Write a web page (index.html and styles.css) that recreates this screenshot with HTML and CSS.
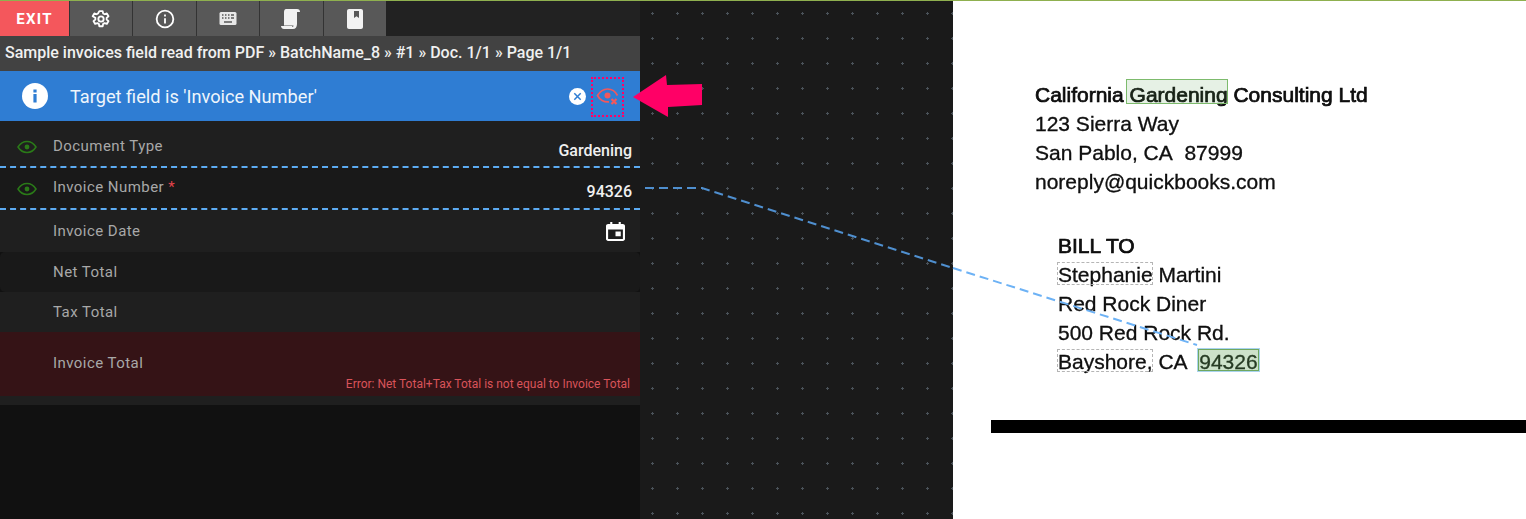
FILE: index.html
```html
<!DOCTYPE html>
<html>
  <head>
    <title>Invoice verification</title>
    <link rel="stylesheet" href="styles.css">
  </head>

  <body>
    <div id="content">
      <div id="sidebar">
        <div id="toolbar">
          <button class="exit-button" type="button">EXIT</button>
          <button class="tool-button" type="button">
            <svg width="20" height="20" viewBox="0 0 24 24" fill="none" stroke="#fff" stroke-width="2.2" stroke-linejoin="round"><path d="M10 2.5h4l.6 2.9 1.7.9 2.7-1 2 3.4-2.2 1.9v2l2.2 1.9-2 3.4-2.7-1-1.7.9-.6 2.9h-4l-.6-2.9-1.7-.9-2.7 1-2-3.4 2.2-1.9v-2L2 8.700l2-3.400 2.700 1 1.700-.9z"/><circle cx="12" cy="12" r="3.200"/></svg>
          </button>
          <button class="tool-button" type="button">
            <svg width="20" height="20" viewBox="0 0 24 24" fill="none" stroke="#fff" stroke-width="2.200"><circle cx="12" cy="12" r="10"/><path d="M12 11v6.500M12 6.500v2.500"/></svg>
          </button>
          <button class="tool-button" type="button">
            <svg width="20" height="16" viewBox="0 0 20 16"><rect x="0.500" y="1" width="17" height="13" rx="1.500" fill="#e8e8e8" transform="translate(1 0)"/><path d="M4 4h1.500M7 4h1.500M10 4h1.500M13 4h3M4 7h1.500M7 7h1.500M10 7h1.500M13 7h3M6 11h8" stroke="#585858" stroke-width="1.400"/></svg>
          </button>
          <button class="tool-button" type="button">
            <svg width="20" height="22" viewBox="0 0 20 22" fill="#f2f2f2"><path d="M5 1h11c2 0 3 1 3 3h-3v12c0 3-1.500 5-4 5H3c-2 0-3-1.500-3-3h11c.500 1.500 1.500 1 1.500-.5H3V4c0-2 1-3 2-3z"/></svg>
          </button>
          <button class="tool-button" type="button">
            <svg width="16" height="20" viewBox="0 0 16 20"><path d="M2 0h12c1.100 0 2 .9 2 2v16c0 1.100-.9 2-2 2H2c-1.100 0-2-.9-2-2V2C0 .9.900 0 2 0z" fill="#f2f2f2"/><path d="M7 2h5v7l-2.500-1.800L7 9z" fill="#585858"/></svg>
          </button>
        </div>

        <div id="breadcrumb">Sample invoices field read from PDF » BatchName_8 » #1 » Doc. 1/1 » Page 1/1</div>

        <div id="banner">
          <svg class="banner-info" width="26" height="26" viewBox="0 0 26 26"><circle cx="13" cy="13" r="13" fill="#fff"/><rect x="11.400" y="11" width="3.200" height="8.500" fill="#2f7dd3"/><rect x="11.400" y="6.500" width="3.200" height="3" fill="#2f7dd3"/></svg>
          <span class="banner-text">Target field is 'Invoice Number'</span>
          <svg class="banner-close" width="17" height="17" viewBox="0 0 17 17"><circle cx="8.500" cy="8.500" r="8.500" fill="#fff"/><path d="M5.300 5.300l6.400 6.400M11.700 5.300l-6.400 6.400" stroke="#2f7dd3" stroke-width="1.500"/></svg>
          <div class="banner-eye">
            <svg width="24" height="20" viewBox="0 0 24 20" fill="none"><path d="M13 14.800C8 15.500 3.500 12.500 1.500 8.500 4 4.500 8 2 11.500 2c4 0 8 2.500 10 6.500" stroke="#f2585c" stroke-width="1.700"/><circle cx="11.500" cy="8.500" r="3" fill="#f2585c"/><path d="M15.500 12l5 5M20.500 12l-5 5" stroke="#f2585c" stroke-width="2.200"/></svg>
          </div>
        </div>

        <div class="field-row row-doctype">
          <svg class="eye" width="20" height="14" viewBox="0 0 20 14" fill="none"><path d="M1 7c2.200-3.500 5.400-5.500 9-5.500S16.800 3.500 19 7c-2.200 3.500-5.400 5.500-9 5.500S3.200 10.500 1 7z" stroke="#2a7a18" stroke-width="1.500"/><circle cx="10" cy="7" r="2.400" fill="#2a7a18"/></svg>
          <span class="field-label">Document Type</span>
          <span class="field-value">Gardening</span>
        </div>
        <div class="field-row row-target">
          <svg class="eye" width="20" height="14" viewBox="0 0 20 14" fill="none"><path d="M1 7c2.200-3.500 5.400-5.500 9-5.500S16.800 3.500 19 7c-2.200 3.500-5.400 5.500-9 5.500S3.200 10.500 1 7z" stroke="#2a7a18" stroke-width="1.500"/><circle cx="10" cy="7" r="2.400" fill="#2a7a18"/></svg>
          <span class="field-label">Invoice Number <span class="required">*</span></span>
          <span class="field-value">94326</span>
        </div>
        <div class="field-row row-date">
          <span class="field-label">Invoice Date</span>
          <svg class="calendar" width="19" height="19" viewBox="0 0 18 20" preserveAspectRatio="none"><path d="M2 2h2V0h2v2h6V0h2v2h2c1 0 2 1 2 2v14c0 1-1 2-2 2H2c-1 0-2-1-2-2V4c0-1 1-2 2-2zm0 6v10h14V8z" fill="#fff"/><rect x="9" y="10" width="5" height="5" fill="#fff"/></svg>
        </div>
        <div class="field-row row-net">
          <span class="field-label">Net Total</span>
        </div>
        <div class="field-row row-tax">
          <span class="field-label">Tax Total</span>
        </div>
        <div class="field-row row-error">
          <span class="field-label">Invoice Total</span>
          <span class="error-text">Error: Net Total+Tax Total is not equal to Invoice Total</span>
        </div>
        <div class="sidebar-foot"></div>
      </div>

      <div id="canvas"></div>

      <div id="document">
        <div class="doc-block">
          <div class="doc-line">California Gardening Consulting Ltd</div>
          <div class="doc-line thin">123 Sierra Way</div>
          <div class="doc-line thin">San Pablo, CA&nbsp; 87999</div>
          <div class="doc-line thin">noreply@quickbooks.com</div>
        </div>
        <div class="doc-block bill-to">
          <div class="doc-line">BILL TO</div>
          <div class="doc-line thin">Stephanie Martini</div>
          <div class="doc-line thin">Red Rock Diner</div>
          <div class="doc-line thin">500 Red Rock Rd.</div>
          <div class="doc-line thin">Bayshore, CA&nbsp; 94326</div>
        </div>
        <div class="doc-rule"></div>
        <div class="box box-green box-gardening"></div>
        <div class="box box-dashed box-stephanie"></div>
        <div class="box box-dashed box-bayshore"></div>
        <div class="box box-target box-zip"></div>
      </div>

      <svg id="overlay" width="1526" height="519" viewBox="0 0 1526 519">
        <defs>
          <pattern id="dots" x="640" y="1" width="25" height="25" patternUnits="userSpaceOnUse">
            <path d="M11 12.500h3M12.500 11v3" stroke="#4a5259" stroke-width="1"/>
          </pattern>
        </defs>
        <rect x="640" y="1" width="313" height="518" fill="url(#dots)"/>
        <path d="M645 188H702L953 268" fill="none" stroke="#4f8fcf" stroke-width="2" stroke-dasharray="9 5"/>
        <path d="M953 268L1197 345" fill="none" stroke="#6db2f5" stroke-width="2" stroke-dasharray="9 5"/>
        <path d="M633 97L666 75 667 85 702 84 702 105 668 107 668 117z" fill="#ff0066"/>
      </svg>
    </div>
  </body>
</html>
```

FILE: styles.css
```css
html, body {
  margin: 0;
  height: 100%;
  overflow: hidden;
}

body {
  background: #1a1a1a;
  font-family: 'Roboto', sans-serif;
}

#content {
  position: relative;
  display: flex;
  width: 1526px;
  height: 519px;
  border-top: 1px solid #8fb04f;
  box-sizing: border-box;
}

#sidebar {
  width: 640px;
  background: #111;
  flex: none;
}

#toolbar {
  display: flex;
  height: 35px;
  background: #222;
}

button {
  border: none;
  padding: 0;
  display: flex;
  align-items: center;
  justify-content: center;
}

.exit-button {
  width: 69px;
  background: #f4575c;
  color: #fff;
  font-family: 'Roboto', sans-serif;
  font-size: 15px;
  font-weight: 700;
  letter-spacing: 1.3px;
}

.tool-button {
  width: 63.4px;
  background: #585858;
  border-left: 1px solid #333;
  box-sizing: border-box;
}

#breadcrumb {
  height: 35px;
  line-height: 34px;
  padding-left: 5px;
  background: #424242;
  color: #f0f0f0;
  font-size: 16px;
  font-weight: 500;
  white-space: nowrap;
}

#banner {
  display: flex;
  align-items: center;
  height: 50px;
  padding-left: 22px;
  background: #2f7dd3;
  color: #eef5fc;
  font-size: 18.2px;
}

.banner-text {
  margin-left: 22px;
  flex: 1;
}

.banner-close {
  margin-right: 5px;
}

.banner-eye {
  display: flex;
  align-items: center;
  justify-content: center;
  width: 33px;
  height: 40px;
  margin: 2px 16px 0 0;
  border: 2px dotted #ff0066;
  box-sizing: border-box;
}

.field-row {
  position: relative;
  display: flex;
  align-items: center;
  padding: 0 8px 0 53px;
  background: #1f1f1f;
  box-sizing: border-box;
}

.field-label {
  color: #a8a8a8;
  font-size: 15px;
  letter-spacing: 0.45px;
  flex: 1;
}

.field-value {
  color: #f0f0f0;
  font-size: 16px;
  font-weight: 500;
}

.required {
  color: #e2434b;
}

.eye {
  position: absolute;
  left: 17px;
  top: 19px;
}

.row-doctype {
  height: 47px;
  border-bottom: 2px dashed #5cabf2;
}

.row-doctype .field-label {
  margin-top: 5px;
}

.row-doctype .field-value {
  margin-top: 13px;
}

.row-target {
  height: 42px;
  background: #191919;
  border-bottom: 2px dashed #5cabf2;
}

.row-target .field-label {
  margin-bottom: 2px;
}

.row-target .field-value {
  margin-top: 6px;
}

.row-target .eye {
  top: 14px;
}

.row-date {
  height: 42px;
}

.calendar {
  margin: 0 7px 0 0;
}

.row-net {
  height: 40px;
  background: #191919;
  border-radius: 5px;
}

.row-tax {
  height: 40px;
}

.row-error {
  position: relative;
  height: 64px;
  background: #351316;
}

.row-error .field-label {
  margin-bottom: 2px;
}

.error-text {
  position: absolute;
  right: 10px;
  bottom: 5px;
  color: #d9535a;
  font-size: 12px;
}

.sidebar-foot {
  height: 9px;
  background: #1f1f1f;
}

#canvas {
  width: 313px;
  flex: none;
}

#document {
  position: relative;
  flex: 1;
  background: #fff;
  padding: 79px 0 0 82px;
  color: #111;
  font-family: 'Liberation Sans', sans-serif;
  font-size: 21px;
  box-sizing: border-box;
}

.doc-block {
  filter: blur(0.5px);
}

.doc-line {
  height: 29px;
  line-height: 29px;
  white-space: nowrap;
  -webkit-text-stroke: 0.7px #000;
}

.doc-line.thin {
  -webkit-text-stroke: 0.3px #000;
}

.bill-to {
  margin: 35px 0 0 23px;
}

.doc-rule {
  height: 13px;
  margin: 44px 0 0 -44px;
  background: #000;
}

/* boxes sit on top of the scanned page */
.box {
  position: absolute;
  box-sizing: border-box;
}

.box-green {
  border: 1.5px solid #7dbb6d;
  background: rgba(90, 160, 80, 0.15);
}

.box-target {
  border: 1px solid #6fa860;
  outline: 1px solid #a9d3ee;
  background: rgba(90, 160, 80, 0.3);
}

.box-dashed {
  border: 1px dashed #b5b5b5;
}

.box-gardening {
  left: 173px;
  top: 78px;
  width: 102px;
  height: 25px;
}

.box-stephanie {
  left: 104px;
  top: 261px;
  width: 96px;
  height: 23px;
}

.box-bayshore {
  left: 104px;
  top: 348px;
  width: 96px;
  height: 23px;
}

.box-zip {
  left: 245px;
  top: 348px;
  width: 61px;
  height: 22px;
}

#overlay {
  position: absolute;
  left: 0;
  top: -1px;
  pointer-events: none;
}
```
